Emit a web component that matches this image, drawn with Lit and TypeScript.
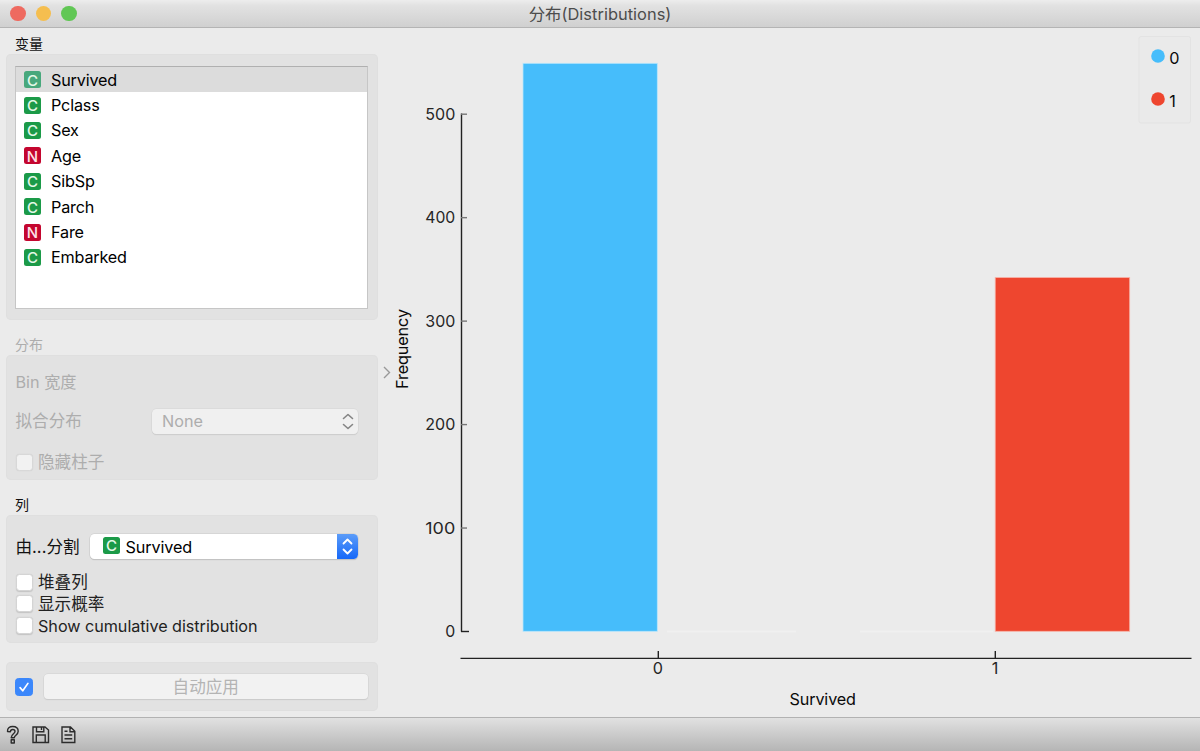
import { LitElement, html, svg, css } from "lit";
import { customElement, property } from "lit/decorators.js";

const FONT = css`Inter, "Noto Sans CJK SC", sans-serif`;

@customElement("var-icon")
class VarIcon extends LitElement {
  @property() kind = "C";
  @property({ type: Boolean }) dim = false;
  static styles = css`
    :host { display: block; width: 17px; height: 17px; flex: none; }
    .box { display: flex; align-items: center; justify-content: center; width: 17px; height: 17px; box-sizing: border-box; padding-top: 1px;
      border-radius: 2.5px; color: #e4f8e8; background: #1b9a48; font: 500 15px/17px ${FONT}; letter-spacing: 0; }
    .n { background: #c4062f; color: #ffe3e8; }
    .dim { background: #48a87c; }
  `;
  render() {
    return html`<div class="box ${this.kind === "N" ? "n" : ""} ${this.dim ? "dim" : ""}">${this.kind}</div>`;
  }
}

@customElement("check-row")
class CheckRow extends LitElement {
  @property() label = "";
  @property({ type: Boolean }) disabled = false;
  @property({ type: Boolean }) checked = false;
  static styles = css`
    :host { display: block; }
    .row { display: flex; align-items: center; gap: 5.5px; height: 22px; font: 16.6px/22px ${FONT}; letter-spacing: 0; color: #222; white-space: nowrap; }
    .latin { font-size: 16.2px; letter-spacing: -0.04px; }
    .box { width: 17px; height: 17px; border-radius: 3.5px; background: #fff; border: 0.5px solid #d4d4d4;
      box-shadow: 0 0.5px 1px #c4c4c4; flex: none; display: flex; box-sizing: border-box; }
    .off { color: #adadad; }
    .off .box { background: #f2f2f2; box-shadow: 0 0 1px #ccc; border-color: #d8d8d8; }
    .on .box { background: #3b87fb; border-color: #3b87fb; box-shadow: none; width: 18px; height: 18px; }
    svg { width: 100%; height: 100%; }
  `;
  render() {
    return html`<div class="row ${this.disabled ? "off" : ""} ${this.checked ? "on" : ""}">
      <span class="box">${this.checked
        ? html`<svg viewBox="0 0 18 18" fill="none" stroke="#fff" stroke-width="1.9" stroke-linecap="round" stroke-linejoin="round"><path d="M4.6 9.7l3 3.6L13.4 4.9" /></svg>`
        : ""}</span>${this.label ? html`<span class=${/^[A-Z]/.test(this.label) ? "latin" : ""}>${this.label}</span>` : ""}</div>`;
  }
}

@customElement("dist-chart")
class DistChart extends LitElement {
  static styles = css`
    :host { display: block; }
    svg { display: block; overflow: visible; }
    .t { font: 16.2px ${FONT}; fill: #262626; letter-spacing: 0; }
    .title { fill: #0a0a0a; }
    .axis { stroke: #222; stroke-width: 1.4; fill: none; }
    .tick { stroke: #777; stroke-width: 1.4; }
    .zero { stroke: #f0f0f0; stroke-width: 2; }
  `;
  private y(v: number) { return 631.3 - v * 1.0346; }
  render() {
    const ticks = [0, 100, 200, 300, 400, 500];
    const bars = [
      { x: 523, w: 134.3, v: 549, c: "#46bdfb", e: "#b9e6fb" },
      { x: 995.2, w: 134.5, v: 342, c: "#ee462f", e: "#f8b5aa" },
    ];
    return html`<svg width="806" height="689" viewBox="394 28 806 689">
      <path class="zero" d="M667 631.5H796M860 631.5H993" />
      ${bars.map((b) => svg`<rect x=${b.x} y=${this.y(b.v)} width=${b.w} height=${b.v * 1.0346} fill=${b.c} stroke=${b.e} stroke-width="0.8" />`)}
      <path class="axis" d="M461.5 113.5V631.5M460.5 658.4H1191.5" />
      ${ticks.map((v) => svg`
        <path class=${v ? "tick" : "axis"} d="M461 ${this.y(v) + 0.2}h${v ? 6 : 8}" />
        <text class="t" x=${v ? 425.3 : 445.3} y=${this.y(v) + 5.7} textLength=${v ? 30 : 10} lengthAdjust="spacingAndGlyphs">${v}</text>`)}
      <path class="axis" d="M658.3 651V658M995.3 651V658" />
      <text class="t" x="657.8" y="674" text-anchor="middle">0</text>
      <text class="t" x="995" y="674" text-anchor="middle">1</text>
      <text class="t title" x="789.5" y="704.5" textLength="66.5">Survived</text>
      <text class="t title" transform="translate(407.7 389) rotate(-90)" textLength="80">Frequency</text>
      <rect x="1139" y="36.5" width="51.5" height="86.5" rx="2" fill="#eaeaea" stroke="#e3e3e3" />
      <circle cx="1158" cy="56" r="6.8" fill="#46bdfb" />
      <circle cx="1158" cy="99" r="6.8" fill="#ee462f" />
      <text class="t title" x="1169.3" y="64">0</text>
      <text class="t title" x="1169.3" y="107">1</text>
    </svg>`;
  }
}

@customElement("app-root")
class AppRoot extends LitElement {
  static styles = css`
    :host { display: block; width: 1200px; height: 751px; overflow: hidden; background: #ebebeb; font: 16.2px/22px ${FONT}; color: #111; }
    .win { display: flex; flex-direction: column; height: 751px; }
    .bar { display: grid; grid-template-columns: 1fr auto 1fr; align-items: center; height: 28px; box-sizing: border-box; border-bottom: 1px solid #b4b4b4;
      background: linear-gradient(#ededed, #e2e2e2 20%, #d0d0d0); color: #4c4c4c; padding: 0 10px; }
    .lights { display: flex; gap: 10px; }
    .light { width: 15.5px; height: 15.5px; border-radius: 50%; }
    .red { background: #ee6a60; } .amber { background: #f5be4f; } .green { background: #61c755; }
    .caption { font-size: 16.4px; letter-spacing: 0.03px; padding-top: 1px; }
    .main { display: flex; height: 689px; }
    .side { width: 372px; padding-left: 6px; display: flex; flex-direction: column; flex: none; }
    .head { font-size: 14px; line-height: 20px; padding-left: 9px; height: 26px; padding-top: 6px; box-sizing: border-box; }
    .group { background: #e2e2e2; border-radius: 5px; box-sizing: border-box; box-shadow: inset 0 0 0 1px #dfdfdf; }
    .vars { height: 266px; padding: 12px 10px 10px 9px; margin-bottom: 9px; }
    .list { background: #fff; height: 243px; box-sizing: border-box; border: 1px solid #c6c6c6; border-top-color: #b0b0b0; color: #000; letter-spacing: -0.18px; }
    .item { display: flex; align-items: center; gap: 10px; height: 25.4px; padding-left: 8px; }
    .sel { background: #dcdcdc; }
    .dis { color: #adadad; }
    .fit { height: 125px; margin-bottom: 9px; padding: 16px 20px 0 9.5px; }
    .line { display: flex; align-items: center; justify-content: space-between; }
    .cjk { font-size: 16.6px; }
    .fit .line { height: 26px; margin: 15px 0 17px; }
    .combo { display: flex; align-items: center; justify-content: space-between; height: 25px; box-sizing: border-box; border-radius: 4.5px; background: #fff; box-shadow: 0 0 0 0.5px #c9c9c9, 0 1px 1px #b8b8b8; overflow: hidden; }
    .none { width: 206px; background: #f0f0f0; padding: 0 4.5px 0 10px; box-shadow: 0 0 0 0.5px #d4d4d4, 0 1px 1px #c6c6c6; }
    .pick { width: 268px; color: #000; }
    .value { display: flex; align-items: flex-start; gap: 5.5px; padding-left: 13px; letter-spacing: -0.1px; }
    .value var-icon { padding-top: 1px; }
    .arrow { width: 21px; height: 25px; background: linear-gradient(#5b9cf9, #1668f8); }
    .split { height: 128px; padding: 19px 20px 0 9.5px; margin-bottom: 19px; }
    .split .line { height: 25px; margin-bottom: 12px; }
    .checks check-row { height: 21.9px; }
    .apply { height: 49px; display: flex; align-items: center; gap: 11px; padding: 0 10.5px 0 9px; }
    .button { flex: 1; height: 25px; line-height: 26px; text-align: center; border-radius: 4px; background: #f2f2f2; color: #b4b4b4; box-shadow: 0 0 0 0.5px #d0d0d0, 0 1px 1px #c6c6c6; }
    .gutter { width: 16px; padding-left: 1px; box-sizing: border-box; display: flex; align-items: center; justify-content: center; }
    .foot { height: 34px; box-sizing: border-box; border-top: 1px solid #b2b2b2; background: linear-gradient(#e1e1e1, #b5b5b5); display: flex; align-items: center; gap: 8px; padding-left: 3px; }
    svg { display: block; flex: none; }
  `;
  private vars = [["C", "Survived"], ["C", "Pclass"], ["C", "Sex"], ["N", "Age"], ["C", "SibSp"], ["C", "Parch"], ["N", "Fare"], ["C", "Embarked"]];
  render() {
    return html`<div class="win">
      <div class="bar">
        <div class="lights"><span class="light red"></span><span class="light amber"></span><span class="light green"></span></div>
        <div class="caption">分布(Distributions)</div><span></span>
      </div>
      <div class="main">
        <div class="side">
          <div class="head">变量</div>
          <div class="group vars"><div class="list">
            ${this.vars.map(([k, n], i) => html`<div class="item ${i ? "" : "sel"}"><var-icon kind=${k} ?dim=${i === 0}></var-icon><span>${n}</span></div>`)}
          </div></div>
          <div class="head dis">分布</div>
          <div class="group fit dis">
            <div>Bin 宽度</div>
            <div class="line"><span class="cjk">拟合分布</span>
              <div class="combo none"><span>None</span>
                <svg width="12" height="17" viewBox="0 0 12 17" fill="none" stroke="#858585" stroke-width="1.6" stroke-linecap="round" stroke-linejoin="round"><path d="M1.5 5.5L6 1.5l4.5 4M1.5 11.5l4.5 4 4.5-4" /></svg>
              </div></div>
            <check-row disabled label="隐藏柱子"></check-row>
          </div>
          <div class="head">列</div>
          <div class="group split">
            <div class="line"><span class="cjk">由...分割</span>
              <div class="combo pick"><div class="value"><var-icon></var-icon><span>Survived</span></div>
                <svg class="arrow" viewBox="0 0 21 25" fill="none" stroke="#fff" stroke-width="1.8" stroke-linecap="round" stroke-linejoin="round"><path d="M6.5 9.5l4-4 4 4M6.5 15.5l4 4 4-4" /></svg>
              </div></div>
            <div class="checks">
              <check-row label="堆叠列"></check-row>
              <check-row label="显示概率"></check-row>
              <check-row label="Show cumulative distribution"></check-row>
            </div>
          </div>
          <div class="group apply"><check-row checked></check-row><div class="button cjk">自动应用</div></div>
        </div>
        <div class="gutter"><svg width="8" height="13" viewBox="0 0 8 13" fill="none" stroke="#999" stroke-width="1.4"><path d="M1 1l5.5 5.5L1 12" /></svg></div>
        <dist-chart></dist-chart>
      </div>
      <div class="foot">
        <svg width="20" height="20" viewBox="0 0 20 20" fill="none" stroke="#2c2c2c" stroke-width="1.4" stroke-linejoin="round"><path d="M4.5 6.5C4.3 3.3 6.5 1.5 9.7 1.5s5.5 1.9 5.5 4.8c0 3.7-3.9 4.1-3.9 6.5H8.2c0-3.9 3.8-4 3.8-6.3 0-1.2-.9-2-2.3-2S7.5 5.3 7.4 6.7zM8.2 14.8h3.1v3.2H8.2z" /></svg>
        <svg width="20" height="20" viewBox="0 0 20 20" fill="none" stroke="#2c2c2c" stroke-width="1.4"><path d="M2 2h12L17.5 5v12.500H2zM5.500 2v4.700h7.300V2M5.300 17.500V10h8.900v7.500M10.500 2.500v2.500" /></svg>
        <svg width="20" height="20" viewBox="0 0 20 20" fill="none" stroke="#2c2c2c" stroke-width="1.4"><path d="M3 2h8.500L15.800 6.300v11.200H3zM11 2.300v4.400h4.500M5.500 6.300h3M5.500 10h7.700M5.500 13.800h7.700" /></svg>
      </div>
    </div>`;
  }
}
